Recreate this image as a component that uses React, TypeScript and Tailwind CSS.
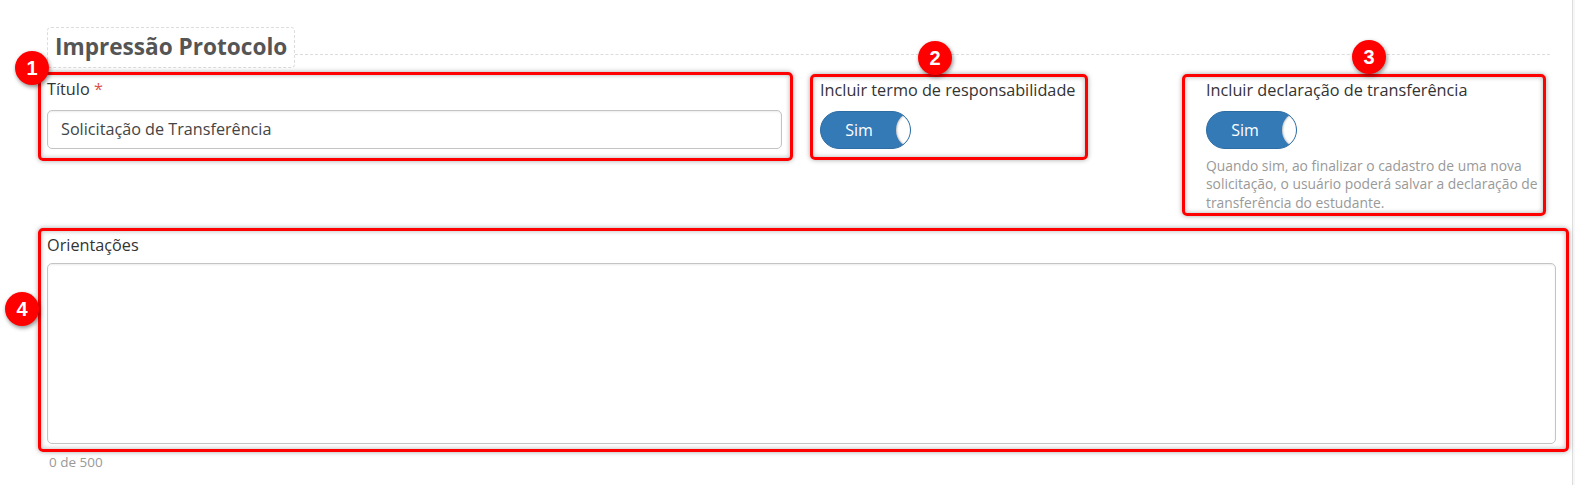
import React from "react";

function Toggle() {
  return (
    <div className="relative w-[91px] h-[38px] rounded-full bg-[#337ab7] border border-[#2e6da4] overflow-hidden">
      <span className="absolute left-0 top-0 w-[76px] h-full flex items-center justify-center text-white text-[16px] leading-none">
        Sim
      </span>
      <span className="absolute left-[75px] top-0 w-[34px] h-full rounded-[50%] bg-white shadow-[inset_1px_0_2px_rgba(0,0,0,0.25)]" />
    </div>
  );
}

function Badge({ n, className }: { n: number; className: string }) {
  return (
    <div
      className={
        "absolute w-[34px] h-[34px] rounded-full bg-[#ff0000] text-white font-bold text-[20px] flex items-center justify-center shadow-[1px_2px_4px_rgba(0,0,0,0.45)] font-['Liberation_Sans',Arial,sans-serif] " +
        className
      }
    >
      {n}
    </div>
  );
}

const box =
  "relative border-[3px] border-[#ff0000] rounded-[5px] shadow-[0_0_5px_rgba(0,0,0,0.35),inset_0_0_5px_rgba(0,0,0,0.3)]";
const label = "text-[16.25px] leading-[22px] text-[#333333]";
const field =
  "rounded-[5px] border border-[#c4c4c4] shadow-[inset_0_1px_2px_rgba(0,0,0,0.08)] bg-white";

export default function App() {
  return (
    <div className="w-[1575px] h-[485px] bg-[#f7f7f7] font-['Open_Sans',sans-serif]">
      <div className="w-[1573px] h-[485px] bg-white border-r border-[#dddddd] pt-[27px]">
        {/* Legend */}
        <div className="flex items-start pl-[47px] pr-[22px]">
          <div className="h-[41px] px-[7px] flex items-center border border-dashed border-[#dcdcdc] rounded-[4px] text-[22.6px] font-bold text-[#555555] leading-none">
            Impressão Protocolo
          </div>
          <div className="flex-1 mt-[27px] border-t border-dashed border-[#dcdcdc]" />
        </div>

        {/* Row of fields */}
        <div className="flex items-start pl-[38px] mt-[4px]">
          <div className={box + " w-[755px] pl-[6px] pr-[8px] pt-[3px] pb-[9px]"}>
            <Badge n={1} className="left-[-26px] top-[-24px]" />
            <div className={label}>
              Título <span className="text-[#d9534f]">*</span>
            </div>
            <div className={field + " mt-[10px] h-[39px] flex items-center px-[13px] text-[16.2px] text-[#444444]"}>
              Solicitação de Transferência
            </div>
          </div>

          <div className={box + " ml-[17px] mt-[2px] w-[278px] pl-[7px] pt-[2px] pb-[8px]"}>
            <Badge n={2} className="left-[105px] top-[-36px]" />
            <div className={label}>Incluir termo de responsabilidade</div>
            <div className="mt-[10px]">
              <Toggle />
            </div>
          </div>

          <div className={box + " ml-[94px] mt-[2px] w-[364px] pl-[21px] pt-[2px] pb-[1px]"}>
            <Badge n={3} className="left-[167px] top-[-37px]" />
            <div className={label}>Incluir declaração de transferência</div>
            <div className="mt-[10px]">
              <Toggle />
            </div>
            <div className="mt-[8px] w-[334px] text-[13.85px] leading-[18.3px] text-[#999999]">
              Quando sim, ao finalizar o cadastro de uma nova solicitação, o usuário poderá salvar a declaração de transferência do estudante.
            </div>
          </div>
        </div>

        {/* Orientações */}
        <div className="pl-[38px] mt-[12px]">
          <div className={box + " w-[1531px] pl-[6px] pr-[10px] pt-[3px] pb-[5px]"}>
            <Badge n={4} className="left-[-36px] top-[61px]" />
            <div className={label}>Orientações</div>
            <div className={field + " mt-[7px] h-[181px]"} />
          </div>
          <div className="mt-[1px] pl-[11px] text-[13.5px] leading-[18px] text-[#999999]">0 de 500</div>
        </div>
      </div>
    </div>
  );
}
